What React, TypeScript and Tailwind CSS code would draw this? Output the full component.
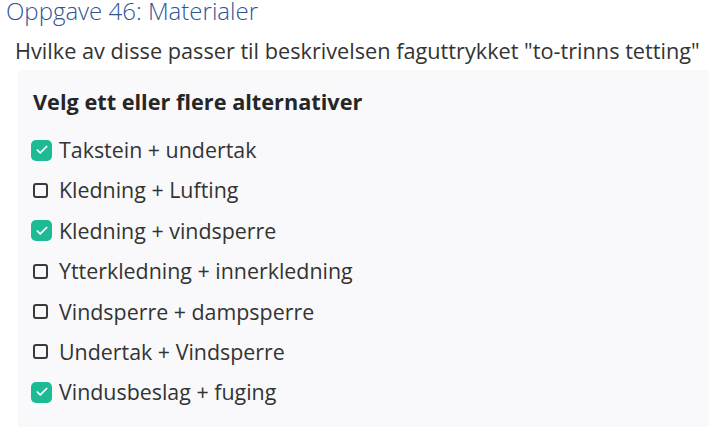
import { Check } from "lucide-react";

const options = [
  { label: "Takstein + undertak", checked: true },
  { label: "Kledning + Lufting", checked: false },
  { label: "Kledning + vindsperre", checked: true },
  { label: "Ytterkledning + innerkledning", checked: false },
  { label: "Vindsperre + dampsperre", checked: false },
  { label: "Undertak + Vindsperre", checked: false },
  { label: "Vindusbeslag + fuging", checked: true },
];

const Box = ({ checked }: { checked: boolean }) => (
  <span className="flex h-[21px] w-[21px] shrink-0 items-center">
    {checked ? (
      <span className="flex h-[21px] w-[21px] items-center justify-center rounded-[5px] bg-[#1dbb95]">
        <Check className="h-[14px] w-[14px] text-white" strokeWidth={3} />
      </span>
    ) : (
      <span className="ml-[2px] h-[15px] w-[15px] rounded-[3px] border-2 border-[#3a3a3a]" />
    )}
  </span>
);

export default function App() {
  return (
    <div className="h-[427px] w-[709px] overflow-hidden bg-white font-['Open_Sans',sans-serif]">
      <h1 className="-mt-[4px] ml-[6px] text-[24px] font-light leading-[30px] text-[#2f5597]">
        Oppgave 46: Materialer
      </h1>
      <p className="ml-[15px] mt-[10px] whitespace-nowrap text-[21.7px] leading-[30px] text-[#333333]">
        Hvilke av disse passer til beskrivelsen faguttrykket "to-trinns tetting"
      </p>
      <div className="ml-[18px] mt-[4px] h-full bg-[#f9f9fb] pl-[15px] pt-[17px]">
        <p className="text-[21.7px] font-bold leading-[30px] text-[#262626]">
          Velg ett eller flere alternativer
        </p>
        <ul className="mt-[18px] flex flex-col gap-[10.4px]">
          {options.map((o) => (
            <li key={o.label} className="-ml-[2px] flex h-[30px] items-center gap-[7px]">
              <Box checked={o.checked} />
              <span className="whitespace-nowrap text-[21.4px] leading-[30px] text-[#333333]">{o.label}</span>
            </li>
          ))}
        </ul>
      </div>
    </div>
  );
}
